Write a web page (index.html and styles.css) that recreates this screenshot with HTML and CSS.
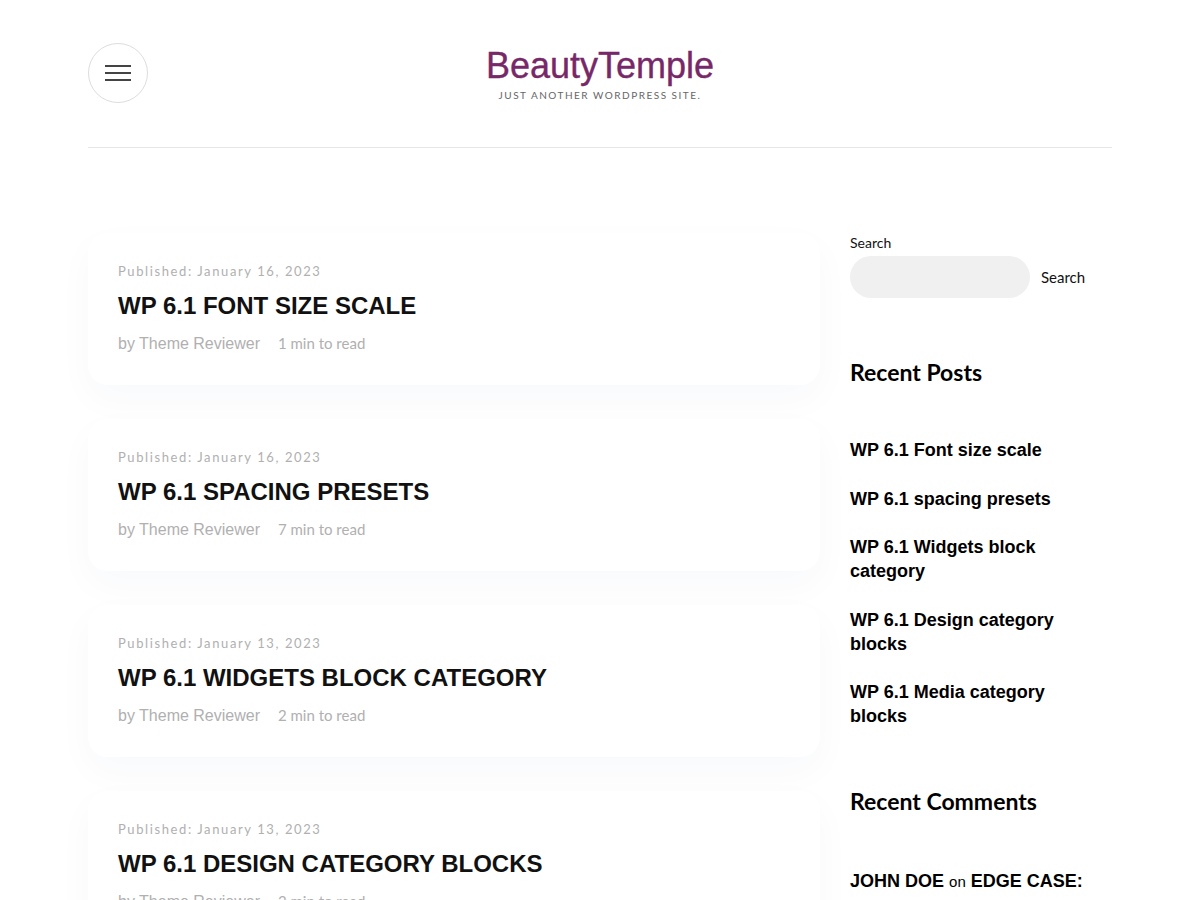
FILE: index.html
```html
<!DOCTYPE html>
<html lang="en">
<head>
<meta charset="utf-8">
<title>BeautyTemple</title>
<link rel="stylesheet" href="styles.css">
</head>
<body>
<div class="page">
  <header class="site-header">
    <button class="menu-btn" aria-label="Menu">
      <span class="bar"></span><span class="bar"></span><span class="bar"></span>
    </button>
    <div class="branding">
      <div class="site-title">BeautyTemple</div>
      <div class="tagline">Just another WordPress site.</div>
    </div>
  </header>

  <div class="content">
    <main class="posts">
      <article class="card">
        <div class="published">Published: January 16, 2023</div>
        <h2 class="post-title">WP 6.1 FONT SIZE SCALE</h2>
        <div class="meta"><span class="author">by Theme Reviewer</span><span class="read">1 min to read</span></div>
      </article>
      <article class="card">
        <div class="published">Published: January 16, 2023</div>
        <h2 class="post-title">WP 6.1 SPACING PRESETS</h2>
        <div class="meta"><span class="author">by Theme Reviewer</span><span class="read">7 min to read</span></div>
      </article>
      <article class="card">
        <div class="published">Published: January 13, 2023</div>
        <h2 class="post-title">WP 6.1 WIDGETS BLOCK CATEGORY</h2>
        <div class="meta"><span class="author">by Theme Reviewer</span><span class="read">2 min to read</span></div>
      </article>
      <article class="card">
        <div class="published">Published: January 13, 2023</div>
        <h2 class="post-title">WP 6.1 DESIGN CATEGORY BLOCKS</h2>
        <div class="meta"><span class="author">by Theme Reviewer</span><span class="read">3 min to read</span></div>
      </article>
    </main>

    <aside class="sidebar">
      <div class="search-widget">
        <label class="search-label" for="s">Search</label>
        <div class="search-row">
          <input id="s" class="search-input" type="text">
          <span class="search-btn">Search</span>
        </div>
      </div>
      <section class="widget">
        <h3 class="widget-title">Recent Posts</h3>
        <ul class="recent">
          <li>WP 6.1 Font size scale</li>
          <li>WP 6.1 spacing presets</li>
          <li>WP 6.1 Widgets block category</li>
          <li>WP 6.1 Design category blocks</li>
          <li>WP 6.1 Media category blocks</li>
        </ul>
      </section>
      <section class="widget">
        <h3 class="widget-title">Recent Comments</h3>
        <ul class="comments">
          <li><span class="strong">JOHN DOE</span> <span class="on">on</span> <span class="strong">EDGE CASE:</span></li>
        </ul>
      </section>
    </aside>
  </div>
</div>
</body>
</html>
```
FILE: styles.css
```css
* { box-sizing: border-box; }
html, body { margin: 0; padding: 0; background: #fff; }
body { font-family: "Liberation Sans", Arial, sans-serif; color: #111; }

.page { width: 1024px; margin: 0 auto; }

.site-header {
  position: relative;
  height: 148px;
  border-bottom: 1px solid #e6e6e6;
  display: flex;
  justify-content: center;
  align-items: flex-start;
}
.menu-btn {
  position: absolute;
  left: 0;
  top: 43px;
  width: 60px;
  height: 60px;
  border-radius: 50%;
  border: 1px solid #ddd;
  background: #fff;
  padding: 0;
  display: flex;
  flex-direction: column;
  align-items: center;
  justify-content: center;
  gap: 5px;
}
.menu-btn .bar { display: block; width: 26px; height: 2px; background: #444; }

.branding { margin-top: 45px; text-align: center; }
.site-title {
  font-family: "Liberation Sans", Arial, sans-serif;
  font-size: 36px;
  line-height: 42px;
  color: #772868;
  -webkit-text-stroke: 0.35px #772868;
}
.tagline {
  font-family: "Lato", "Open Sans", sans-serif;
  font-size: 10px;
  letter-spacing: 1.5px;
  text-transform: uppercase;
  color: #666;
  margin-top: 2px;
}

.content {
  display: flex;
  gap: 30px;
  padding-top: 85px;
}
.posts { width: 732px; display: flex; flex-direction: column; gap: 34px; }
.card {
  background: #fff;
  border-radius: 20px;
  padding: 28px 30px 30px;
  box-shadow: 0 14px 36px rgba(30, 50, 120, 0.03);
}
.published {
  font-family: "Lato", "Open Sans", sans-serif;
  font-size: 13px;
  letter-spacing: 1.6px;
  line-height: 20px;
  height: 20px;
  color: #b0b0b0;
}
.post-title {
  margin: 10px 0 0;
  font-size: 24px;
  line-height: 30px;
  height: 30px;
  font-weight: bold;
  color: #111;
}
.meta { margin-top: 10px; height: 24px; line-height: 24px; display: flex; gap: 18px; align-items: baseline; overflow: visible; }
.author { font-size: 16px; color: #b0b0b0; }
.read { font-family: "Lato", "Open Sans", sans-serif; font-size: 15px; color: #b0b0b0; }

.sidebar { flex: 1; }
.search-label {
  display: block;
  font-family: "Lato", "Open Sans", sans-serif;
  font-size: 14px;
  line-height: 20px;
  color: #111;
}
.search-row { display: flex; align-items: center; gap: 11px; margin-top: 3px; }
.search-input {
  width: 180px;
  height: 42px;
  border: none;
  border-radius: 21px;
  background: #f0f0f0;
}
.search-btn { font-family: "Lato", "Open Sans", sans-serif; font-size: 15px; color: #111; }

.widget { margin-top: 60px; }
.widget-title {
  margin: 0;
  font-family: "Lato", "Open Sans", sans-serif;
  font-weight: 700;
  font-size: 23px;
  line-height: 28px;
  color: #000;
}
.recent, .comments { list-style: none; margin: 52px 0 0; padding: 0; }
.recent li {
  font-size: 18px;
  font-weight: bold;
  line-height: 24px;
  margin-bottom: 24.5px;
  width: 230px;
  color: #000;
}
.widget + .widget { margin-top: 59px; }
.comments { margin-top: 54px; }
.comments li { font-size: 18px; line-height: 24px; color: #000; }
.comments .strong { font-weight: bold; }
.comments .on { font-size: 15px; }
```
